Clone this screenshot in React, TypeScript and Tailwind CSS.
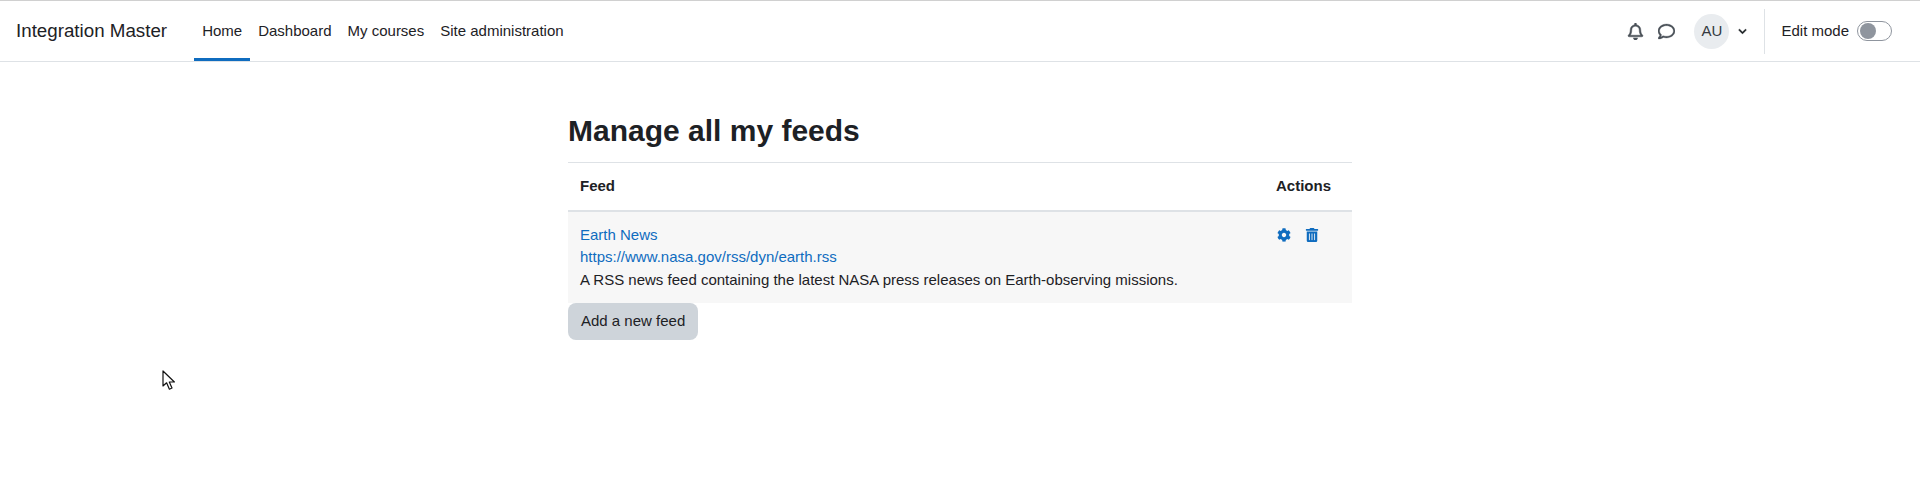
import { FaCog, FaTrashAlt, FaRegBell, FaRegComment, FaChevronDown } from "react-icons/fa";

const navLinks = ["Dashboard", "My courses", "Site administration"];

export default function App() {
  return (
    <div className="relative h-[490px] bg-white text-[15px] leading-[22.5px] text-[#1d2125] font-['Liberation_Sans',Arial,sans-serif]">
      <header className="flex h-[62px] items-stretch border-t border-b border-t-[#d0d0d0] border-b-[#dee2e6] pl-4 pr-[28px]">
        <div className="flex items-center text-[18.75px] mr-[27px]">Integration Master</div>
        <nav className="flex items-stretch">
          <a className="flex items-center px-2 border-b-[3px] border-[#0f6cbf] pt-[3px]">Home</a>
          {navLinks.map((link) => (
            <a key={link} className="flex items-center px-2">{link}</a>
          ))}
        </nav>
        <div className="ml-auto flex items-center">
          <FaRegBell className="w-[17px] h-[17px] text-[#495057] stroke-[14px]" />
          <FaRegComment className="ml-[14px] w-[17px] h-[17px] text-[#495057] stroke-[10px]" />
          <div className="ml-[19px] flex h-[35px] w-[35px] items-center justify-center rounded-full bg-[#e9ecef] text-[#343a40]">AU</div>
          <FaChevronDown className="ml-[9px] w-[9px] h-[9px] stroke-[20px]" />
          <div className="ml-[17px] mr-4 h-[45px] w-px bg-[#dee2e6]" />
          <span>Edit mode</span>
          <div className="ml-2 flex h-[20px] w-[35px] items-center rounded-full border border-[#8f959e] bg-white px-[2px]">
            <div className="h-4 w-4 rounded-full bg-[#8f959e]" />
          </div>
        </div>
      </header>

      <main className="mx-auto w-[784px] pt-[51px]">
        <h2 className="text-[30px] leading-[36px] font-bold mb-[13px] text-[#1d2125]">Manage all my feeds</h2>
        <table className="w-full border-collapse">
          <thead>
            <tr className="border-t border-[#dee2e6]">
              <th className="p-3 text-left font-bold">Feed</th>
              <th className="w-[76px] p-3 pl-0 text-left font-bold">Actions</th>
            </tr>
          </thead>
          <tbody>
            <tr className="border-t-2 border-[#dee2e6] bg-[#f7f7f7]">
              <td className="p-3 align-top">
                <a className="block text-[#0f6cbf]">Earth News</a>
                <a className="block text-[#0f6cbf]">https://www.nasa.gov/rss/dyn/earth.rss</a>
                <div>A RSS news feed containing the latest NASA press releases on Earth-observing missions.</div>
              </td>
              <td className="p-3 pl-0 align-top">
                <div className="flex h-[22px] items-center gap-[14px] pl-px text-[#0f6cbf]">
                  <FaCog className="w-[14px] h-[14px]" />
                  <FaTrashAlt className="w-[14px] h-[14px]" />
                </div>
              </td>
            </tr>
          </tbody>
        </table>
        <button className="block h-[37px] rounded-lg bg-[#ced4da] px-[13px] text-[#1d2125]">Add a new feed</button>
      </main>

      <svg className="absolute left-[162px] top-[370px]" width="14" height="21" viewBox="0 0 14 21">
        <path d="M1 1 L1 16 L4.6 12.8 L7.4 19.2 L10 18 L7.3 12 L12.4 12 Z" fill="#fff" stroke="#111" strokeWidth="1.2" strokeLinejoin="round" />
      </svg>
    </div>
  );
}
